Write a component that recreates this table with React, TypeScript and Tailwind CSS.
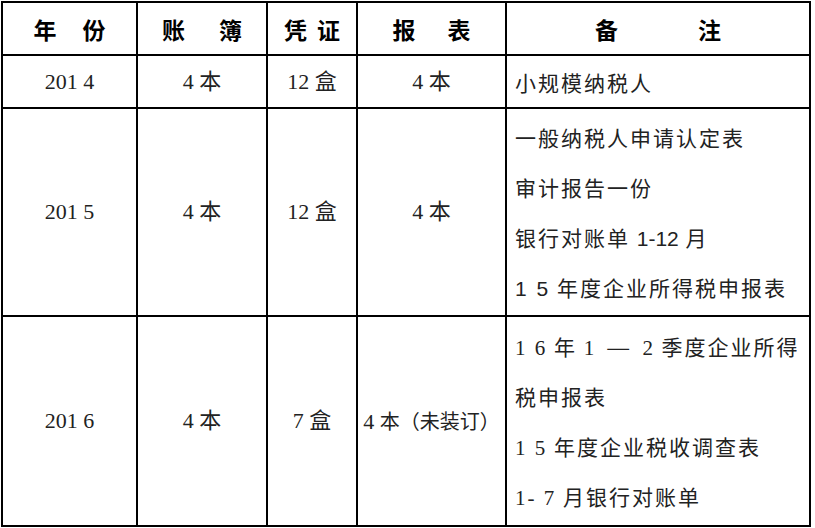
const serif = "font-['Liberation_Serif','Noto_Sans_CJK_SC',serif]";

function Head({ chars, gap }: { chars: string[]; gap: string }) {
  return (
    <th className="border-2 border-black p-0 align-middle">
      <div className={`flex justify-center ${gap} text-[23px] leading-[30px] font-bold text-black`}>
        {chars.map((c) => (
          <span key={c}>{c}</span>
        ))}
      </div>
    </th>
  );
}

function Cell({ children }: { children: React.ReactNode }) {
  return (
    <td className={`border-2 border-black p-0 text-center align-middle text-[22px] leading-[30px] text-[#222] ${serif}`}>
      {children}
    </td>
  );
}

function Notes({ lines }: { lines: React.ReactNode[] }) {
  return (
    <td className="border-2 border-black py-0 pl-[8px] align-middle text-[21px] text-[#222]">
      {lines.map((l, i) => (
        <div key={i} className="h-[50px] leading-[50px] tracking-[2px] whitespace-nowrap">
          {l}
        </div>
      ))}
    </td>
  );
}

export default function App() {
  return (
    <div className="h-[528px] w-[815px] overflow-hidden bg-white pl-px pt-px font-['Noto_Sans_CJK_SC',sans-serif]">
      <table className="table-fixed border-collapse">
        <colgroup>
          <col className="w-[135px]" />
          <col className="w-[130px]" />
          <col className="w-[90px]" />
          <col className="w-[149px]" />
          <col className="w-[304px]" />
        </colgroup>
        <tbody>
          <tr className="h-[53px]">
            <Head chars={["年", "份"]} gap="gap-[26px]" />
            <Head chars={["账", "簿"]} gap="gap-[34px]" />
            <Head chars={["凭", "证"]} gap="gap-[10px]" />
            <Head chars={["报", "表"]} gap="gap-[32px]" />
            <Head chars={["备", "注"]} gap="gap-[80px]" />
          </tr>
          <tr className="h-[53px]">
            <Cell>201 4</Cell>
            <Cell>4 本</Cell>
            <Cell>12 盒</Cell>
            <Cell>4 本</Cell>
            <Notes lines={["小规模纳税人"]} />
          </tr>
          <tr className="h-[208px]">
            <Cell>201 5</Cell>
            <Cell>4 本</Cell>
            <Cell>12 盒</Cell>
            <Cell>4 本</Cell>
            <Notes
              lines={[
                "一般纳税人申请认定表",
                "审计报告一份",
                <>
                  银行对账单 <span className="font-['Liberation_Sans',sans-serif] tracking-normal">1-12</span> 月
                </>,
                <>
                  <span className="font-['Liberation_Sans',sans-serif]">1 5</span> 年度企业所得税申报表
                </>,
              ]}
            />
          </tr>
          <tr className="h-[210px]">
            <Cell>201 6</Cell>
            <Cell>4 本</Cell>
            <Cell>7 盒</Cell>
            <Cell>
              <span className="whitespace-nowrap">
                4 <span className="font-['Noto_Sans_CJK_SC',sans-serif] text-[20px]">本（未装订）</span>
              </span>
            </Cell>
            <Notes
              lines={[
                <>
                  <span className={serif}>1 6</span> 年 <span className={serif}>1</span>{" "}
                  <span className="mx-[6px] inline-block scale-x-[1.3]">—</span>{" "}
                  <span className={serif}>2</span> 季度企业所得
                </>,
                "税申报表",
                <>
                  <span className={serif}>1 5</span> 年度企业税收调查表
                </>,
                <>
                  <span className={serif}>1- 7</span> 月银行对账单
                </>,
              ]}
            />
          </tr>
        </tbody>
      </table>
    </div>
  );
}
